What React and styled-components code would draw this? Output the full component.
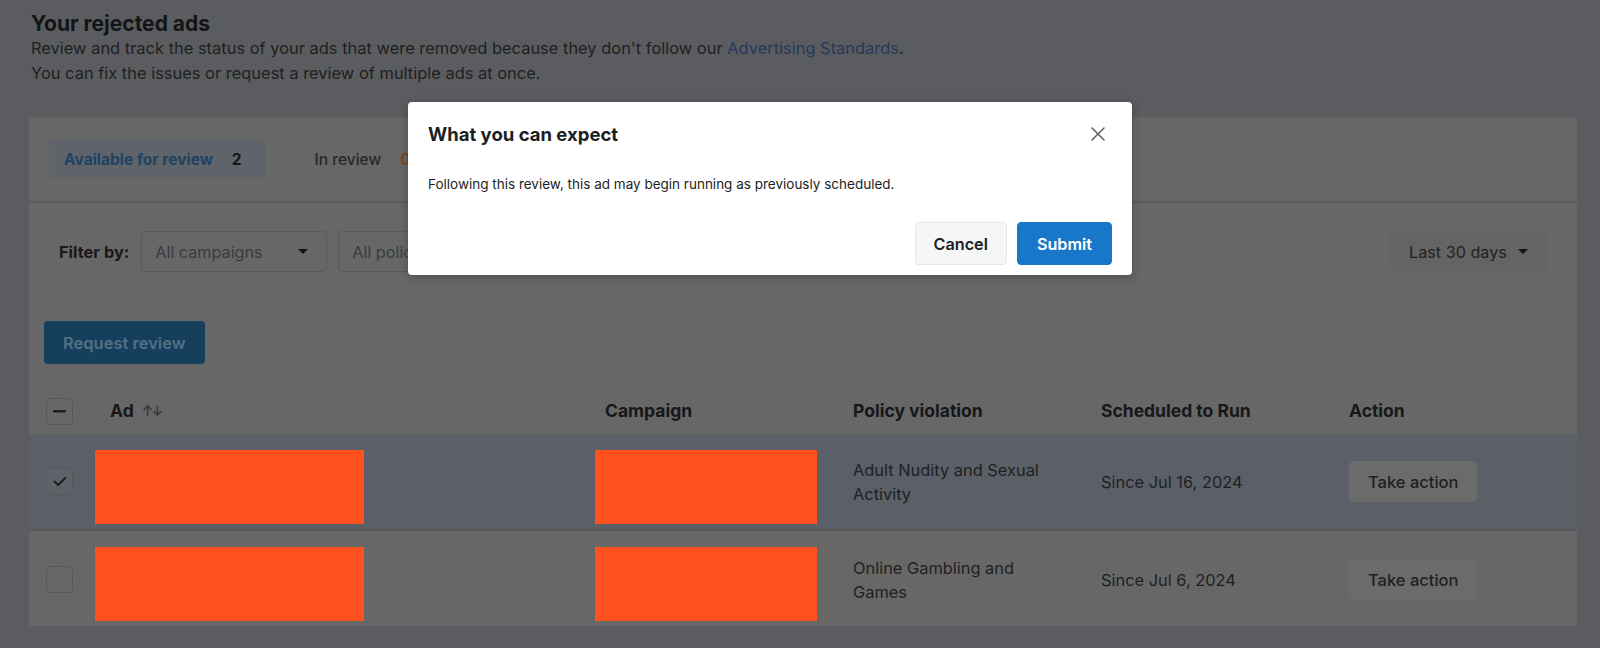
import React from "react";
import styled, { createGlobalStyle } from "styled-components";

const Global = createGlobalStyle`
  html, body { margin: 0; padding: 0; }
  body {
    background: #5b5c60;
    font-family: Inter, "Noto Sans", Roboto, sans-serif;
    color: #1c1d1f;
    width: 1600px;
    height: 648px;
    overflow: hidden;
  }
`;

const Page = styled.div`
  position: relative;
  width: 1600px;
  height: 648px;
  background: #5b5c60;
  padding: 11px 23px 0 29px;
  box-sizing: border-box;
`;

const Header = styled.header`
  padding-left: 2px;
  margin-bottom: 31px;
`;

const Title = styled.h1`
  margin: 0;
  font-size: 21px;
  font-weight: 700;
  line-height: 25px;
  color: #131416;
`;

const Sub = styled.p`
  margin: 0;
  font-size: 16.45px;
  line-height: 25px;
  color: #1e1f21;
`;

const Link = styled.a`
  color: #26395a;
  text-decoration: none;
`;

const Card = styled.section`
  background: #676767;
  width: 1548px;
  height: 509px;
  border-radius: 2px;
  overflow: hidden;
`;

const TabBar = styled.div`
  display: flex;
  align-items: center;
  gap: 49px;
  height: 84px;
  padding: 0 20px;
  border-bottom: 2px solid #5a5b5c;
`;

const Tab = styled.div`
  display: flex;
  align-items: center;
  gap: 19px;
  height: 38px;
  padding: ${(p) => (p.$active ? "0 24px 0 15px" : "0")};
  border-radius: 4px;
  background: ${(p) => (p.$active ? "#5e6469" : "transparent")};
  font-size: 15.5px;
  font-weight: ${(p) => (p.$active ? 700 : 500)};
  color: ${(p) => (p.$active ? "#1f4364" : "#262728")};
`;

const Count = styled.span`
  font-weight: 700;
  color: ${(p) => p.$color || "#18181a"};
`;

const FilterRow = styled.div`
  display: flex;
  align-items: center;
  padding: 28px 30px 0 30px;
  height: 41px;
`;

const FilterLabel = styled.span`
  font-size: 16.4px;
  font-weight: 700;
  color: #19191b;
  margin-right: 12px;
`;

const Select = styled.div`
  display: flex;
  align-items: center;
  justify-content: space-between;
  box-sizing: border-box;
  width: ${(p) => p.$w}px;
  height: 41px;
  padding: 0 18px 0 13px;
  margin-right: 11px;
  border: 1px solid #5a5b5d;
  border-radius: 4px;
  font-size: 16.2px;
  color: #3a3b3d;
`;

const DateSelect = styled(Select)`
  margin: 0 0 0 auto;
  border-color: transparent;
  background: #646464;
  color: #202123;
  padding: 0 18px 0 18px;
`;

const Caret = styled.span`
  width: 0;
  height: 0;
  border-left: 5px solid transparent;
  border-right: 5px solid transparent;
  border-top: 5px solid #131415;
`;

const ActionBar = styled.div`
  padding: 49px 15px 0 15px;
`;

const PrimaryDim = styled.button`
  height: 43px;
  padding: 0 19px;
  border: none;
  border-radius: 4px;
  background: #163e5d;
  color: #527084;
  font-family: inherit;
  font-size: 16.5px;
  font-weight: 600;
`;

const Grid = styled.div`
  display: grid;
  grid-template-columns: 66px 500px 248px 248px 248px 1fr;
  margin-top: 24px;
`;

const Row = styled.div`
  display: contents;
`;

const Cell = styled.div`
  display: flex;
  align-items: center;
  box-sizing: border-box;
  height: ${(p) => (p.$head ? 46 : 97)}px;
  padding-left: ${(p) => p.$pl ?? 10}px;
  background: ${(p) => p.$bg || "transparent"};
  border-bottom: ${(p) => (p.$sep ? "2px solid #57585b" : "none")};
  font-size: ${(p) => (p.$head ? 17.5 : 16.4)}px;
  font-weight: ${(p) => (p.$head ? 700 : 400)};
  line-height: 24px;
  color: ${(p) => (p.$head ? "#161719" : "#1e1f21")};
`;

const RedactCell = styled(Cell)`
  align-items: flex-start;
  padding-top: 16px;
`;

const Sort = styled.span`
  margin-left: 8px;
  font-weight: 400;
  font-size: 14px;
  color: #2e2f30;
  letter-spacing: -2px;
`;

const Check = styled.span`
  display: inline-flex;
  align-items: center;
  justify-content: center;
  width: 27px;
  height: 27px;
  box-sizing: border-box;
  border: 1px solid #57585a;
  border-radius: 4px;
  background: ${(p) => p.$bg || "transparent"};
`;

const Redact = styled.div`
  width: ${(p) => p.$w}px;
  height: 74px;
  background: #ff5020;
`;

const GhostBtn = styled.button`
  height: 41px;
  padding: 0 19px;
  border: none;
  border-radius: 5px;
  background: #6b6b6b;
  font-family: inherit;
  font-size: 16.5px;
  font-weight: 500;
  color: #1e1f21;
`;

const Scrim = styled.div`
  position: absolute;
  inset: 0;
`;

const Modal = styled.div`
  position: absolute;
  left: 408px;
  top: 102px;
  width: 724px;
  box-sizing: border-box;
  background: #fff;
  border-radius: 4px;
  box-shadow: 0 2px 10px rgba(0, 0, 0, 0.25);
  padding: 18px 20px 10px 20px;
`;

const ModalHead = styled.div`
  display: flex;
  align-items: center;
  justify-content: space-between;
  height: 28px;
`;

const ModalTitle = styled.h2`
  margin: 0;
  font-size: 18.5px;
  font-weight: 700;
  color: #1c1e21;
`;

const Close = styled.button`
  display: flex;
  align-items: center;
  justify-content: center;
  width: 24px;
  height: 24px;
  margin-right: 2px;
  padding: 0;
  border: none;
  background: none;
`;

const ModalBody = styled.p`
  margin: 26px 0 0 0;
  font-size: 13.5px;
  line-height: 20px;
  color: #1c1e21;
`;

const ModalFoot = styled.div`
  display: flex;
  justify-content: flex-end;
  gap: 10px;
  margin-top: 28px;
`;

const Btn = styled.button`
  height: 43px;
  padding: 0 ${(p) => p.$px}px;
  border-radius: 4px;
  border: 1px solid ${(p) => (p.$primary ? "#1877c9" : "#e4e6e9")};
  background: ${(p) => (p.$primary ? "#1877c9" : "#f5f6f7")};
  color: ${(p) => (p.$primary ? "#fff" : "#1c1e21")};
  font-family: inherit;
  font-size: 16.2px;
  font-weight: 600;
`;

const rows = [
  { policy: ["Adult Nudity and Sexual", "Activity"], since: "Since Jul 16, 2024", checked: true },
  { policy: ["Online Gambling and", "Games"], since: "Since Jul 6, 2024", checked: false },
];

export default function App() {
  return (
    <>
      <Global />
      <Page>
        <Header>
          <Title>Your rejected ads</Title>
          <Sub>
            Review and track the status of your ads that were removed because they don't follow our{" "}
            <Link>Advertising Standards</Link>.
          </Sub>
          <Sub>You can fix the issues or request a review of multiple ads at once.</Sub>
        </Header>
        <Card>
          <TabBar>
            <Tab $active>
              Available for review <Count>2</Count>
            </Tab>
            <Tab>
              In review <Count $color="#80451b">0</Count>
            </Tab>
          </TabBar>
          <FilterRow>
            <FilterLabel>Filter by:</FilterLabel>
            <Select $w={186}>
              All campaigns <Caret />
            </Select>
            <Select $w={186}>
              All policies <Caret />
            </Select>
            <DateSelect $w={157}>
              Last 30 days <Caret />
            </DateSelect>
          </FilterRow>
          <ActionBar>
            <PrimaryDim>Request review</PrimaryDim>
          </ActionBar>
          <Grid>
            <Row>
              <Cell $head $pl={17}>
                <Check>
                  <svg width="13" height="3" viewBox="0 0 13 3">
                    <rect width="13" height="2.4" rx="1" fill="#1d1e20" />
                  </svg>
                </Check>
              </Cell>
              <Cell $head $pl={15}>
                Ad <Sort>↑↓</Sort>
              </Cell>
              <Cell $head>Campaign</Cell>
              <Cell $head>Policy violation</Cell>
              <Cell $head>Scheduled to Run</Cell>
              <Cell $head>Action</Cell>
            </Row>
            {rows.map((r, i) => {
              const bg = r.checked ? "#5b5f67" : undefined;
              const sep = i === 0;
              return (
                <Row key={i}>
                  <Cell $pl={17} $bg={bg} $sep={sep}>
                    <Check $bg={r.checked ? "#5f6369" : undefined}>
                      {r.checked && (
                        <svg width="14" height="11" viewBox="0 0 14 11">
                          <path d="M1.5 5.5 L5.2 9 L12.5 1.8" fill="none" stroke="#1d1f22" strokeWidth="2" strokeLinecap="round" strokeLinejoin="round" />
                        </svg>
                      )}
                    </Check>
                  </Cell>
                  <RedactCell $pl={0} $bg={bg} $sep={sep}>
                    <Redact $w={269} />
                  </RedactCell>
                  <RedactCell $pl={0} $bg={bg} $sep={sep}>
                    <Redact $w={222} />
                  </RedactCell>
                  <Cell $bg={bg} $sep={sep}>
                    <div>
                      {r.policy[0]}
                      <br />
                      {r.policy[1]}
                    </div>
                  </Cell>
                  <Cell $bg={bg} $sep={sep}>{r.since}</Cell>
                  <Cell $bg={bg} $sep={sep}>
                    <GhostBtn>Take action</GhostBtn>
                  </Cell>
                </Row>
              );
            })}
          </Grid>
        </Card>
        <Scrim />
        <Modal role="dialog">
          <ModalHead>
            <ModalTitle>What you can expect</ModalTitle>
            <Close aria-label="Close">
              <svg width="14" height="14" viewBox="0 0 14 14">
                <path d="M1 1 L13 13 M13 1 L1 13" stroke="#5a5d61" strokeWidth="1.5" strokeLinecap="round" />
              </svg>
            </Close>
          </ModalHead>
          <ModalBody>Following this review, this ad may begin running as previously scheduled.</ModalBody>
          <ModalFoot>
            <Btn $px={18}>Cancel</Btn>
            <Btn $primary $px={19}>Submit</Btn>
          </ModalFoot>
        </Modal>
      </Page>
    </>
  );
}
